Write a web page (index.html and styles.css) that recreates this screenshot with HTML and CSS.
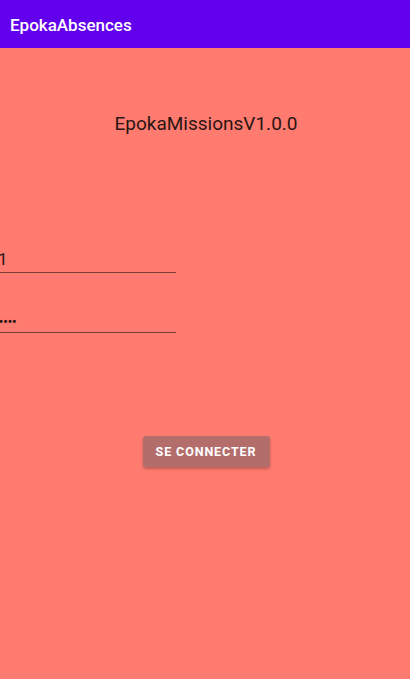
FILE: index.html
```html
<!DOCTYPE html>
<html lang="fr">
<head>
<meta charset="utf-8">
<title>EpokaAbsences</title>
<link rel="stylesheet" href="styles.css">
</head>
<body>
<div class="screen">
  <header class="appbar">EpokaAbsences</header>
  <main class="content">
    <h1 class="title">EpokaMissionsV1.0.0</h1>
    <div class="field field-login">
      <span class="value">1</span>
    </div>
    <div class="field field-pass">
      <span class="dots">&#8226;&#8226;&#8226;&#8226;&#8226;</span>
    </div>
    <div class="actions">
      <button class="btn" type="button">SE CONNECTER</button>
    </div>
  </main>
</div>
</body>
</html>
```
FILE: styles.css
```css
html, body {
  margin: 0;
  padding: 0;
}
body {
  font-family: Roboto, "Noto Sans", sans-serif;
  background: #ff7b70;
  overflow: hidden;
}
.screen {
  width: 410px;
  height: 679px;
  display: flex;
  flex-direction: column;
  background: #ff7b70;
}
.appbar {
  height: 48px;
  background: #6200ee;
  color: #ffffff;
  font-size: 17px;
  font-weight: 500;
  display: flex;
  align-items: center;
  padding-left: 10px;
  padding-top: 2px;
  box-sizing: border-box;
}
.content {
  display: flex;
  flex-direction: column;
}
.title {
  margin: 64px 0 0 0;
  font-size: 19px;
  font-weight: 400;
  color: #2a1512;
  text-align: center;
  line-height: 24px;
  padding-left: 2px;
}
.field {
  width: 176px;
  border-bottom: 1px solid rgba(0, 0, 0, 0.5);
  box-sizing: border-box;
  overflow: hidden;
}
.field-login {
  margin-top: 112px;
  height: 25px;
}
.value {
  display: block;
  font-size: 17px;
  line-height: 20px;
  color: #2a1512;
  margin-left: -2px;
  margin-top: 1px;
}
.field-pass {
  margin-top: 35px;
  height: 25px;
}
.dots {
  display: block;
  font-size: 15px;
  line-height: 16px;
  color: #2a1512;
  margin-left: -6px;
  margin-top: 6px;
  letter-spacing: -0.6px;
}
.actions {
  display: flex;
  justify-content: center;
  margin-top: 103px;
  padding-left: 2px;
}
.btn {
  width: 127px;
  height: 31px;
  border: none;
  border-radius: 3px;
  background: #b36e6c;
  color: #ffffff;
  font-family: Roboto, "Noto Sans", sans-serif;
  font-size: 12.5px;
  font-weight: 700;
  letter-spacing: 0.9px;
  box-shadow: 0 2px 3px rgba(0, 0, 0, 0.25);
  padding: 0;
}
```
